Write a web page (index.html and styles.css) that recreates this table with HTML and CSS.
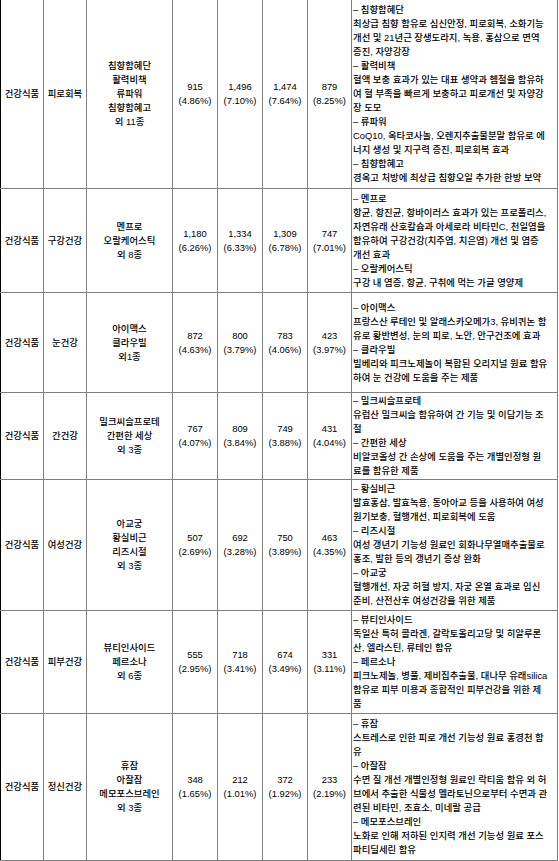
FILE: index.html
```html
<!DOCTYPE html>
<html lang="ko">
<head>
<meta charset="utf-8">
<title>건강식품</title>
<link rel="stylesheet" href="styles.css">
</head>
<body>
<table class="grid">
  <colgroup>
    <col class="c-cat"><col class="c-sub"><col class="c-prod">
    <col class="c-num"><col class="c-num"><col class="c-num"><col class="c-num4">
    <col class="c-desc">
  </colgroup>
  <tbody>
    <tr class="r1">
      <td class="mid">건강식품</td>
      <td class="mid">피로회복</td>
      <td class="mid">침향함혜단<br>활력비책<br>류파워<br>침향함혜고<br>외 11종</td>
      <td class="mid">915<br>(4.86%)</td>
      <td class="mid">1,496<br>(7.10%)</td>
      <td class="mid">1,474<br>(7.64%)</td>
      <td class="mid">879<br>(8.25%)</td>
      <td class="desc">– 침향함혜단<br>최상급 침향 함유로 심신안정, 피로회복, 소화기능<br>개선 및 21년근 장생도라지, 녹용, 홍삼으로 면역<br>증진, 자양강장<br>– 활력비책<br>혈액 보충 효과가 있는 대표 생약과 헴철을 함유하<br>여 혈 부족을 빠르게 보충하고 피로개선 및 자양강<br>장 도모<br>– 류파워<br>CoQ10, 옥타코사놀, 오렌지추출물분말 함유로 에<br>너지 생성 및 지구력 증진, 피로회복 효과<br>– 침향함혜고<br>경옥고 처방에 최상급 침향오일 추가한 한방 보약</td>
    </tr>
    <tr class="r2">
      <td class="mid">건강식품</td>
      <td class="mid">구강건강</td>
      <td class="mid">멘프로<br>오랄케어스틱<br>외 8종</td>
      <td class="mid">1,180<br>(6.26%)</td>
      <td class="mid">1,334<br>(6.33%)</td>
      <td class="mid">1,309<br>(6.78%)</td>
      <td class="mid">747<br>(7.01%)</td>
      <td class="desc">– 멘프로<br>항균, 항진균, 항바이러스 효과가 있는 프로폴리스,<br>자연유래 산호칼슘과 아세로라 비타민C, 천일염을<br>함유하여 구강건강(치주염, 치은염) 개선 및 염증<br>개선 효과<br>– 오랄케어스틱<br>구강 내 염증, 항균, 구취에 먹는 가글 영양제</td>
    </tr>
    <tr class="r3">
      <td class="mid">건강식품</td>
      <td class="mid">눈건강</td>
      <td class="mid">아이맥스<br>클라우빌<br>외1종</td>
      <td class="mid">872<br>(4.63%)</td>
      <td class="mid">800<br>(3.79%)</td>
      <td class="mid">783<br>(4.06%)</td>
      <td class="mid">423<br>(3.97%)</td>
      <td class="desc">– 아이맥스<br>프랑스산 루테인 및 알래스카오메가3, 유비퀴논 함<br>유로 황반변성, 눈의 피로, 노안, 안구건조에 효과<br>– 클라우빌<br>빌베리와 피크노제놀이 복합된 오리지널 원료 함유<br>하여 눈 건강에 도움을 주는 제품</td>
    </tr>
    <tr class="r4">
      <td class="mid">건강식품</td>
      <td class="mid">간건강</td>
      <td class="mid">밀크씨슬프로테<br>간편한 세상<br>외 3종</td>
      <td class="mid">767<br>(4.07%)</td>
      <td class="mid">809<br>(3.84%)</td>
      <td class="mid">749<br>(3.88%)</td>
      <td class="mid">431<br>(4.04%)</td>
      <td class="desc">– 밀크씨슬프로테<br>유럽산 밀크씨슬 함유하여 간 기능 및 이담기능 조<br>절<br>– 간편한 세상<br>비알코올성 간 손상에 도움을 주는 개별인정형 원<br>료를 함유한 제품</td>
    </tr>
    <tr class="r5">
      <td class="mid">건강식품</td>
      <td class="mid">여성건강</td>
      <td class="mid">아교궁<br>황실비근<br>리즈시절<br>외 3종</td>
      <td class="mid">507<br>(2.69%)</td>
      <td class="mid">692<br>(3.28%)</td>
      <td class="mid">750<br>(3.89%)</td>
      <td class="mid">463<br>(4.35%)</td>
      <td class="desc">– 황실비근<br>발효홍삼, 발효녹용, 동아아교 등을 사용하여 여성<br>원기보충, 혈행개선, 피로회복에 도움<br>– 리즈시절<br>여성 갱년기 기능성 원료인 회화나무열매추출물로<br>홍조, 발한 등의 갱년기 증상 완화<br>– 아교궁<br>혈행개선, 자궁 허혈 방지, 자궁 온열 효과로 임신<br>준비, 산전산후 여성건강을 위한 제품</td>
    </tr>
    <tr class="r6">
      <td class="mid">건강식품</td>
      <td class="mid">피부건강</td>
      <td class="mid">뷰티인사이드<br>페르소나<br>외 6종</td>
      <td class="mid">555<br>(2.95%)</td>
      <td class="mid">718<br>(3.41%)</td>
      <td class="mid">674<br>(3.49%)</td>
      <td class="mid">331<br>(3.11%)</td>
      <td class="desc">– 뷰티인사이드<br>독일산 특허 콜라겐, 갈락토올리고당 및 히알루론<br>산, 엘라스틴, 류테인 함유<br>– 페르소나<br>피크노제놀, 병풀, 제비집추출물, 대나무 유래silica<br>함유로 피부 미용과 종합적인 피부건강을 위한 제<br>품</td>
    </tr>
    <tr class="r7">
      <td class="mid">건강식품</td>
      <td class="mid">정신건강</td>
      <td class="mid">휴잠<br>아잘잠<br>메모포스브레인<br>외 3종</td>
      <td class="mid">348<br>(1.65%)</td>
      <td class="mid">212<br>(1.01%)</td>
      <td class="mid">372<br>(1.92%)</td>
      <td class="mid">233<br>(2.19%)</td>
      <td class="desc">– 휴잠<br>스트레스로 인한 피로 개선 기능성 원료 홍경천 함<br>유<br>– 아잘잠<br>수면 질 개선 개별인정형 원료인 락티움 함유 외 허<br>브에서 추출한 식물성 멜라토닌으로부터 수면과 관<br>련된 비타민, 조효소, 미네랄 공급<br>– 메모포스브레인<br>노화로 인해 저하된 인지력 개선 기능성 원료 포스<br>파티딜세린 함유</td>
    </tr>
  </tbody>
</table>
</body>
</html>
```

FILE: styles.css
```css
html, body {
  margin: 0;
  padding: 0;
  background: #ffffff;
}

body {
  font-family: "Liberation Sans", "Noto Sans CJK KR", sans-serif;
  font-size: 9.4px;
  font-weight: 500;
  line-height: 14px;
  color: #000000;
}

.grid {
  border-collapse: collapse;
  table-layout: fixed;
  width: 557px;
  margin-top: -1px;
  border-left: 1px solid #000000;
}

.c-cat { width: 43px; }
.c-sub { width: 43px; }
.c-prod { width: 86px; }
.c-num { width: 45px; }
.c-num4 { width: 44px; }
.c-desc { width: 206px; }

.grid td {
  border: 1px solid #7f7f7f;
  padding: 1px 1px;
  vertical-align: middle;
  white-space: nowrap;
  overflow: hidden;
}

.grid td:first-child {
  border-left: 1px solid #000000;
}

.mid {
  text-align: center;
}

.desc {
  text-align: left;
  padding-left: 3px;
  padding-right: 0;
}

.r1 { height: 189px; }
.r2 { height: 104px; }
.r3 { height: 100px; }
.r4 { height: 87px; }
.r5 { height: 131px; }
.r6 { height: 103px; }
.r7 { height: 147px; }
```
